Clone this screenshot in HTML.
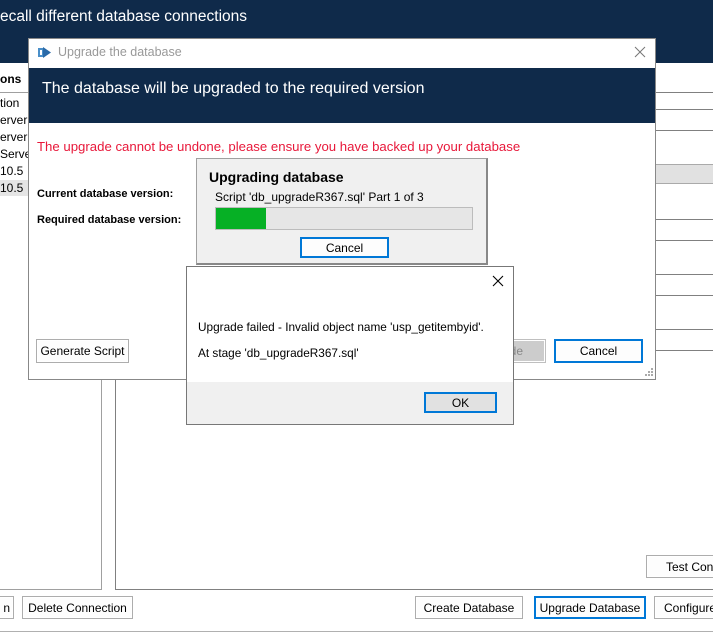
<!DOCTYPE html>
<html><head><meta charset="utf-8"><style>
*{box-sizing:border-box;margin:0;padding:0}
body{width:713px;height:636px;overflow:hidden;background:#fff;position:relative;font-family:"Liberation Sans",sans-serif;font-size:12px;color:#000}
.a{position:absolute;white-space:nowrap}
.btn{position:absolute;border:1px solid #adadad;background:#e1e1e1;box-shadow:inset 0 0 0 1px #fff;text-align:center;font-size:12px;display:flex;align-items:center;justify-content:center;white-space:nowrap}
.bw{background:#fdfdfd}
.blue{border:2px solid #0078d7;box-shadow:none}
.hl{position:absolute;height:1px;background:#a0a0a0}
</style></head><body>
<div class="a" style="left:0;top:0;width:713px;height:63px;background:#0f2a4a"></div>
<div class="a" style="left:0;top:8px;color:#fff;font-size:15.5px">ecall different database connections</div>
<div class="a" style="left:0;top:72px;font-weight:bold;font-size:12px">ons</div>
<div class="hl" style="left:0;top:92px;width:28px"></div>
<div class="a" style="left:0;top:96px">tion</div>
<div class="a" style="left:0;top:113px">erver 6</div>
<div class="a" style="left:0;top:130px">erver 6</div>
<div class="a" style="left:0;top:147px">Server</div>
<div class="a" style="left:0;top:164px">10.5</div>
<div class="a" style="left:0;top:180px;width:28px;height:16px;background:#e5e5e5"></div>
<div class="a" style="left:0;top:181px">10.5</div>
<div class="a" style="left:101px;top:379px;width:1px;height:210px;background:#a0a0a0"></div>
<div class="hl" style="left:0;top:589px;width:102px"></div>
<div class="a" style="left:115px;top:379px;width:1px;height:211px;background:#808080"></div>
<div class="a" style="left:115px;top:589px;width:598px;height:1px;background:#808080"></div>
<div class="hl" style="left:655px;top:92px;width:58px;background:#808080"></div>
<div class="hl" style="left:655px;top:109px;width:58px;background:#808080"></div>
<div class="hl" style="left:655px;top:130px;width:58px;background:#808080"></div>
<div class="a" style="left:655px;top:164px;width:58px;height:20px;background:#e1e1e1;border-top:1px solid #aaa;border-bottom:1px solid #aaa"></div>
<div class="hl" style="left:655px;top:219px;width:58px;background:#808080"></div>
<div class="hl" style="left:655px;top:240px;width:58px;background:#808080"></div>
<div class="hl" style="left:655px;top:274px;width:58px;background:#808080"></div>
<div class="hl" style="left:655px;top:295px;width:58px;background:#808080"></div>
<div class="hl" style="left:655px;top:329px;width:58px;background:#808080"></div>
<div class="hl" style="left:655px;top:350px;width:58px;background:#808080"></div>
<div class="btn bw" style="left:646px;top:555px;width:80px;height:23px;justify-content:flex-start;padding-left:19px">Test Conn</div>
<div class="btn bw" style="left:-20px;top:596px;width:34px;height:23px;justify-content:flex-end;padding-right:3px">n</div>
<div class="btn bw" style="left:22px;top:596px;width:111px;height:23px">Delete Connection</div>
<div class="btn bw" style="left:415px;top:596px;width:108px;height:23px">Create Database</div>
<div class="btn bw blue" style="left:534px;top:596px;width:112px;height:23px">Upgrade Database</div>
<div class="btn bw" style="left:654px;top:596px;width:70px;height:23px;justify-content:flex-start;padding-left:9px">Configure</div>
<div class="hl" style="left:0;top:631px;width:713px;background:#b0b0b0"></div>

<div class="a" style="left:28px;top:38px;width:628px;height:342px;background:#fff;border:1px solid #888"></div>
<svg class="a" style="left:38px;top:46px" width="14" height="13" viewBox="0 0 14 13"><rect x="0" y="2" width="6" height="9" fill="#4a8fc9"/><path d="M5 1 L13 6.5 L5 12 Z" fill="#2a6aa8"/><rect x="2" y="4" width="2" height="5" fill="#fff"/></svg>
<div class="a" style="left:58px;top:45px;color:#999;font-size:12.5px">Upgrade the database</div>
<svg class="a" style="left:634px;top:46px" width="12" height="12"><path d="M1 1L11 11M11 1L1 11" stroke="#777" stroke-width="1"/></svg>
<div class="a" style="left:29px;top:68px;width:626px;height:55px;background:#0f2a4a"></div>
<div class="a" style="left:42px;top:80px;color:#fff;font-size:16px">The database will be upgraded to the required version</div>
<div class="a" style="left:37px;top:139px;color:#e8183a;font-size:13.2px">The upgrade cannot be undone, please ensure you have backed up your database</div>
<div class="a" style="left:37px;top:188px;font-weight:bold;font-size:11px">Current database version:</div>
<div class="a" style="left:37px;top:214px;font-weight:bold;font-size:11px">Required database version:</div>
<div class="btn bw" style="left:36px;top:339px;width:93px;height:24px">Generate Script</div>
<div class="btn" style="left:480px;top:339px;width:66px;height:24px;background:#ccc;color:#888;border-color:#bfbfbf;justify-content:flex-end;padding-right:22px">de</div>
<div class="btn bw blue" style="left:554px;top:339px;width:89px;height:24px">Cancel</div>
<svg class="a" style="left:645px;top:368px" width="9" height="9"><g fill="#aaa"><rect x="6" y="0" width="2" height="2"/><rect x="3" y="3" width="2" height="2"/><rect x="6" y="3" width="2" height="2"/><rect x="0" y="6" width="2" height="2"/><rect x="3" y="6" width="2" height="2"/><rect x="6" y="6" width="2" height="2"/></g></svg>

<div class="a" style="left:196px;top:158px;width:292px;height:107px;background:#f0f0f0;border:1px solid #a0a0a0;border-right:2px solid #888;border-bottom:2px solid #888"></div>
<div class="a" style="left:209px;top:169px;font-weight:bold;font-size:14px">Upgrading database</div>
<div class="a" style="left:215px;top:190px;font-size:12px">Script 'db_upgradeR367.sql' Part 1 of 3</div>
<div class="a" style="left:215px;top:207px;width:258px;height:23px;background:#e6e6e6;border:1px solid #bcbcbc"></div>
<div class="a" style="left:216px;top:208px;width:50px;height:21px;background:#06b025"></div>
<div class="btn bw blue" style="left:300px;top:237px;width:89px;height:21px">Cancel</div>

<div class="a" style="left:186px;top:266px;width:328px;height:159px;background:#fff;border:1px solid #777"></div>
<div class="a" style="left:187px;top:382px;width:326px;height:42px;background:#f0f0f0"></div>
<svg class="a" style="left:492px;top:275px" width="12" height="12"><path d="M1 1L11 11M11 1L1 11" stroke="#000" stroke-width="1.1"/></svg>
<div class="a" style="left:198px;top:320px;font-size:11.8px">Upgrade failed - Invalid object name 'usp_getitembyid'.</div>
<div class="a" style="left:198px;top:346px;font-size:11.8px">At stage 'db_upgradeR367.sql'</div>
<div class="btn blue" style="left:424px;top:392px;width:73px;height:21px">OK</div>
</body></html>
